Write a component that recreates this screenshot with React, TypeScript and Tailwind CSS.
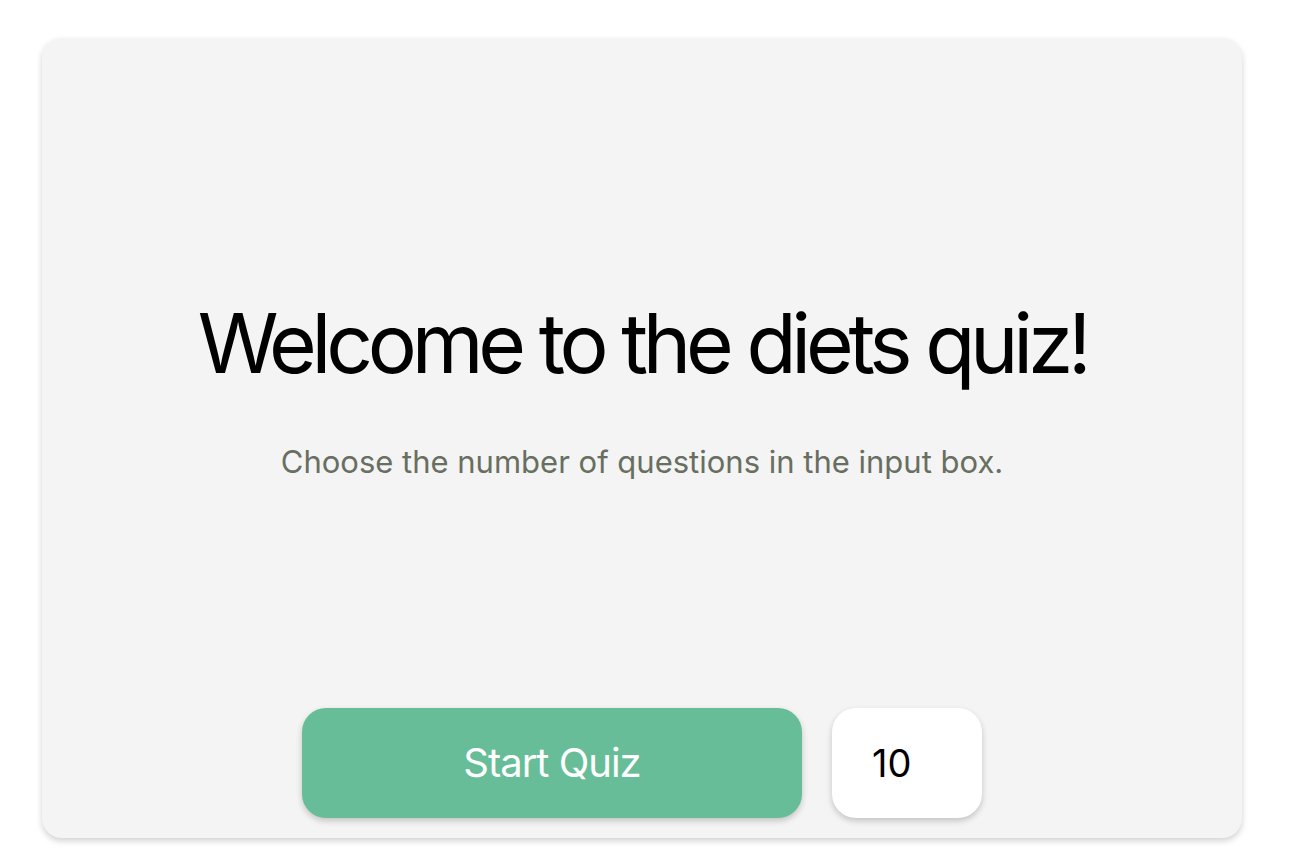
import React, { useState } from "react";

const App: React.FC = () => {
	const [count, setCount] = useState("10");

	return (
		<div className="min-h-screen bg-white pt-[38px] pl-[42px]" style={{ fontFamily: "Inter, sans-serif" }}>
			<div className="w-[1200px] h-[800px] bg-[#f4f4f4] rounded-[20px] shadow-[0_3px_6px_rgba(0,0,0,0.18)] flex flex-col items-center pt-[265px] pb-[20px]">
				<h1 className="text-[82px] leading-none text-black tracking-[-0.064em]">Welcome to the diets quiz!</h1>
				<p className="mt-[61px] text-[31px] leading-none text-[#686e60]">
					Choose the number of questions in the input box.
				</p>

				<div className="mt-auto flex gap-[30px]">
					<button
						type="button"
						className="w-[500px] h-[110px] bg-[#67bd97] rounded-[24px] text-white text-[40px] tracking-[-0.025em] shadow-[0_3px_6px_rgba(0,0,0,0.2)]">
						Start Quiz
					</button>
					<input
						type="text"
						value={count}
						onChange={(e) => setCount(e.target.value)}
						className="w-[150px] h-[110px] bg-white rounded-[24px] pl-[40px] text-[38px] text-black outline-none shadow-[0_3px_6px_rgba(0,0,0,0.2)]"
					/>
				</div>
			</div>
		</div>
	);
};

export default App;
